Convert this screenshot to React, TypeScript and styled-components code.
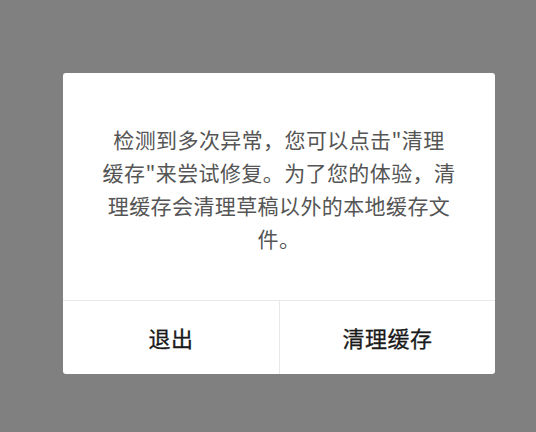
import React from 'react';
import styled, { createGlobalStyle } from 'styled-components';

const GlobalStyle = createGlobalStyle`
	html, body {
		margin: 0;
		padding: 0;
		background: #808080;
	}
	* {
		box-sizing: border-box;
	}
`;

const Overlay = styled.div`
	width: 536px;
	height: 432px;
	padding: 73px 0 0 63px;
	background: #808080;
	font-family: 'Noto Sans CJK SC', 'Noto Sans', sans-serif;
`;

const Dialog = styled.div`
	width: 432px;
	background: #fff;
	border-radius: 3px;
	overflow: hidden;
	display: flex;
	flex-direction: column;
`;

const Message = styled.p`
	margin: 0;
	padding: 50px 16px 45px;
	font-size: 21px;
	line-height: 33px;
	letter-spacing: 0.4px;
	color: #555;
	text-align: center;
`;

const Actions = styled.div`
	display: grid;
	grid-template-columns: 1fr 1fr;
	border-top: 1px solid #e8e8e8;
	height: 74px;
`;

const ActionButton = styled.button<{ $divided?: boolean }>`
	border: none;
	background: transparent;
	padding: 0 0 2px;
	font-family: inherit;
	font-size: 22px;
	font-weight: 400;
	letter-spacing: 0.5px;
	color: #1a1a1a;
	-webkit-text-stroke: 0.3px #1a1a1a;
	cursor: pointer;
	border-left: ${props => (props.$divided ? '1px solid #e8e8e8' : 'none')};
`;

const lines = [
	'检测到多次异常，您可以点击"清理',
	'缓存"来尝试修复。为了您的体验，清',
	'理缓存会清理草稿以外的本地缓存文',
	'件。'
];

export default function App() {
	return (
		<>
			<GlobalStyle />
			<Overlay>
				<Dialog>
					<Message>
						{lines.map((line, i) => (
							<React.Fragment key={i}>
								{line}
								{i < lines.length - 1 && <br />}
							</React.Fragment>
						))}
					</Message>
					<Actions>
						<ActionButton>退出</ActionButton>
						<ActionButton $divided>清理缓存</ActionButton>
					</Actions>
				</Dialog>
			</Overlay>
		</>
	);
}
